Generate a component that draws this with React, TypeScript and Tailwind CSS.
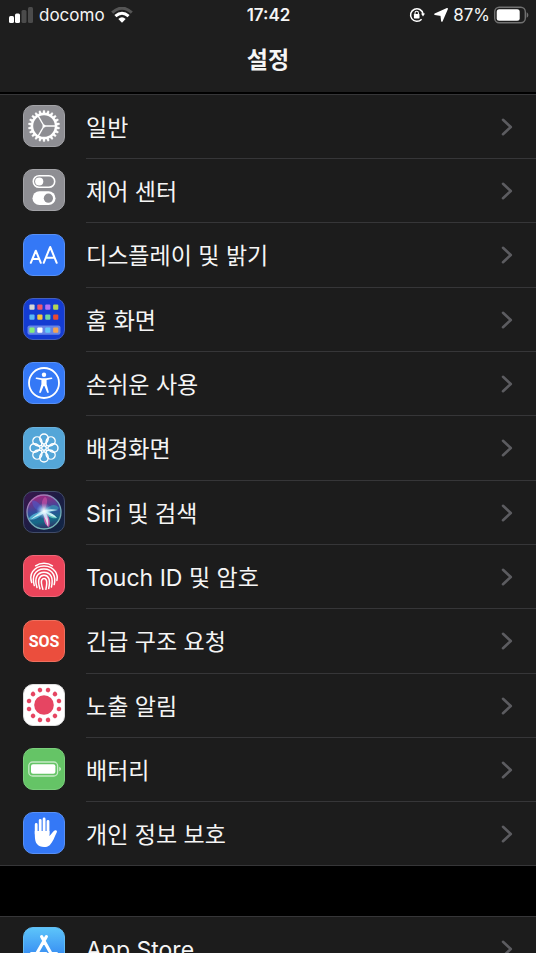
import type { ReactNode } from "react";

interface Setting {
  id: string;
  label: string;
  icon: ReactNode;
}

const GEAR_TEETH = Array.from({ length: 22 }, (_, i) => (i * 360) / 22);
const FLOWER_PETALS = Array.from({ length: 8 }, (_, i) => i * 45);
const EXPOSURE_DOTS = Array.from({ length: 12 }, (_, i) => 15 + i * 30);

const HOME_APPS = [
  ["#d6d6d6", "#f2566a", "#b072f5", "#b3d455"],
  ["#5bb8f5", "#f8c43c", "#6fd6a0", "#ea4a32"],
  ["#83ee78", "#ffffff", "#63c9fa", "#f3a353"],
];

function Tile({ fill, edge, children }: { fill: string; edge: string; children: ReactNode }) {
  return (
    <svg viewBox="0 0 42 42" className="mb-0.5 h-[42px] w-[42px] shrink-0" aria-hidden="true">
      <rect x="0.5" y="0.5" width="41" height="41" rx="9.5" fill={fill} stroke={edge} />
      {children}
    </svg>
  );
}

function GeneralIcon() {
  return (
    <Tile fill="#8e8e93" edge="#a3a3a7">
      <g stroke="#fff" fill="none">
        {GEAR_TEETH.map((deg) => (
          <path
            key={deg}
            d="M19.7 8.5 20.3 5.4h1.4L22.3 8.5z"
            fill="#fff"
            strokeWidth="0.4"
            transform={`rotate(${deg} 21 21)`}
          />
        ))}
        <circle cx="21" cy="21" r="12" strokeWidth="2.4" />
        <circle cx="21" cy="21" r="1.6" fill="#fff" stroke="none" />
        <path d="M21 21h12M21 21l-6-10.4M21 21l-6 10.4" strokeWidth="1.4" />
      </g>
    </Tile>
  );
}

function ControlCenterIcon() {
  return (
    <Tile fill="#8e8e93" edge="#a3a3a7">
      <rect x="10.3" y="6.7" width="21.4" height="11.6" rx="5.8" fill="none" stroke="#fff" strokeWidth="1.6" />
      <circle cx="16.2" cy="12.5" r="4.1" fill="#fff" />
      <rect x="9.5" y="22.3" width="23" height="13.8" rx="6.9" fill="#fff" />
      <circle cx="25.4" cy="29.2" r="4.6" fill="#8e8e93" />
    </Tile>
  );
}

function DisplayIcon() {
  return (
    <Tile fill="#3478f6" edge="#5890f5">
      <g fill="none" stroke="#fff" strokeWidth="2" strokeLinecap="round" strokeLinejoin="round">
        <path d="M7.8 28.8 12.8 16.7 17.8 28.8M9.5 24.9h6.6" />
        <path d="M20.7 28.8 27.2 13 33.7 28.8M22.9 23.7h8.6" />
      </g>
    </Tile>
  );
}

function HomeScreenIcon() {
  return (
    <Tile fill="#143cd2" edge="#4560bc">
      <rect x="4.5" y="27.4" width="33" height="9.4" rx="2.2" fill="#6584e8" />
      {HOME_APPS.map((row, y) =>
        row.map((color, x) => (
          <rect
            key={color}
            x={6.4 + x * 7.9}
            y={[6.6, 16.5, 29.5][y]}
            width="5.2"
            height="5.2"
            rx="1"
            fill={color}
          />
        )),
      )}
    </Tile>
  );
}

function AccessibilityIcon() {
  return (
    <Tile fill="#3478f6" edge="#5890f5">
      <circle cx="21" cy="21" r="15" fill="none" stroke="#fff" strokeWidth="1.8" />
      <circle cx="21" cy="12.7" r="2.2" fill="#fff" />
      <path
        d="M13.5 15.5 19 16.2h4l5.5-.7c1-.1 1.2 1.3.2 1.5l-5.1 1.1v4.1l2.1 7.5c.3 1.2-1.2 1.7-1.7.6L21.4 24h-.8L18 30.3c-.5 1.1-2 .6-1.7-.6l2.1-7.5v-4.1L13.3 17c-1-.2-.8-1.6.2-1.5z"
        fill="#fff"
      />
    </Tile>
  );
}

function WallpaperIcon() {
  return (
    <Tile fill="#54a6d8" edge="#6bb1dc">
      <g fill="none" stroke="#fff" strokeWidth="1.4">
        {FLOWER_PETALS.map((deg) => (
          <path
            key={deg}
            d="M21 17.3C18 15.8 16.6 13.6 16.8 11.2A4.2 4.2 0 0 1 25.2 11.2C25.4 13.6 24 15.8 21 17.3z"
            transform={`rotate(${deg} 21 21)`}
          />
        ))}
        <circle cx="21" cy="21" r="2.3" />
      </g>
    </Tile>
  );
}

function SiriIcon() {
  return (
    <Tile fill="url(#siri-back)" edge="#414b68">
      <defs>
        <linearGradient id="siri-back" x1="0" y1="0" x2="1" y2="1">
          <stop offset="0" stopColor="#3b174f" />
          <stop offset="0.5" stopColor="#1c1c42" />
          <stop offset="1" stopColor="#102846" />
        </linearGradient>
        <linearGradient id="siri-orb" x1="0.4" y1="0" x2="0.6" y2="1">
          <stop offset="0" stopColor="#a0267e" />
          <stop offset="0.45" stopColor="#344a9d" />
          <stop offset="0.75" stopColor="#156a87" />
          <stop offset="1" stopColor="#332a63" />
        </linearGradient>
        <linearGradient id="siri-ring" x1="0" y1="0" x2="0.6" y2="1">
          <stop offset="0" stopColor="#c85ab3" />
          <stop offset="0.5" stopColor="#75a2ba" />
          <stop offset="1" stopColor="#72b6b4" />
        </linearGradient>
        <radialGradient id="siri-glow">
          <stop offset="0" stopColor="#fff" />
          <stop offset="0.35" stopColor="#d8f5ff" stopOpacity="0.7" />
          <stop offset="1" stopColor="#65bdf0" stopOpacity="0" />
        </radialGradient>
      </defs>
      <circle cx="21" cy="21" r="17" fill="url(#siri-orb)" stroke="url(#siri-ring)" strokeWidth="1.3" />
      <path d="M21 20C17 12 12 8 9 10c0 6 5 11 12 10z" fill="#455ed4" opacity="0.5" />
      <path d="M21 20C25 12 25 7 22 6c-4 3-4 9-1 14z" fill="#d451a6" opacity="0.6" />
      <path d="M21 20C28 12 33 13 36 17c-3 4-9 5-15 3z" fill="#39a6b9" opacity="0.6" />
      <path d="M21 20C13 21 6 25 6 28c5 2 11-1 15-8z" fill="#61def0" opacity="0.6" />
      <path d="M21 20C27 21 32 24 34 27c-5 1-10-1-13-7z" fill="#74e8cf" opacity="0.7" />
      <path d="M21 20C20 28 21 34 26 36c2-5 0-12-5-16z" fill="#f05bb5" opacity="0.8" />
      <path
        d="M7 29Q15 22 20 20Q25 17 35 19Q28 20 24 21Q30 22 34 27Q27 25 23 22Q26 28 25 36Q23 29 20 23Q14 25 7 29z"
        fill="#e8fcff"
        opacity="0.8"
      />
      <circle cx="21" cy="20" r="8" fill="url(#siri-glow)" />
    </Tile>
  );
}

function TouchIdIcon() {
  return (
    <Tile fill="#eb445a" edge="#ef6778">
      <g fill="none" stroke="#fff" strokeWidth="1.5" strokeLinecap="round">
        <path d="M12.6 10.8C17.4 7.3 24.6 7.3 29.4 10.8" />
        <path d="M8.7 27.6C7.4 23.5 7.6 19.6 9.6 16.6C14.8 9 27.2 9 32.4 16.6C34.4 19.6 34.6 22.5 33.9 25.4" />
        <path d="M11.3 30.6C10 26 9.8 22.6 11.5 19.3C15.4 12.3 26.6 12.3 30.5 19.3C31.9 22 32 26 31.2 29.6" />
        <path d="M14 32.6C12.7 28.5 12 24.6 13.8 21.3C16.8 15.9 25.2 15.9 28.2 21.3C29.6 24.5 29.3 28.5 28.4 32" />
        <path d="M16.9 33.8C15.7 29.8 14.7 26.4 16.2 23.3C18.2 19.3 23.8 19.3 25.8 23.3C27 26.4 26.5 30 25.7 33.5" />
        <path d="M19.9 34.3C18.9 31 17.7 27.5 18.7 25.1C19.7 22.9 22.3 22.9 23.3 25.1C24.2 27.7 23.6 31.2 22.9 34.3" />
      </g>
    </Tile>
  );
}

function SosIcon() {
  return (
    <Tile fill="#eb4e3d" edge="#ef705f">
      <text
        x="21"
        y="27"
        fill="#fff"
        textAnchor="middle"
        className="font-['Roboto',sans-serif] text-[16px] font-bold"
      >
        SOS
      </text>
    </Tile>
  );
}

function ExposureIcon() {
  return (
    <Tile fill="#fff" edge="#dedede">
      <circle cx="21" cy="21" r="9.8" fill="#e64562" />
      {EXPOSURE_DOTS.map((deg) => (
        <circle key={deg} cx="21" cy="5.5" r="2.3" fill="#e64562" transform={`rotate(${deg} 21 21)`} />
      ))}
    </Tile>
  );
}

function BatteryTileIcon() {
  return (
    <Tile fill="#65c466" edge="#7bcf7c">
      <rect x="5.8" y="14" width="28.8" height="14" rx="3.8" fill="none" stroke="#c6eac6" strokeWidth="1.3" />
      <rect x="8" y="16.2" width="24.4" height="9.6" rx="2" fill="#fff" />
      <path d="M36.2 18.8c2.4.8 2.4 3.6 0 4.4z" fill="#c6eac6" />
    </Tile>
  );
}

function PrivacyIcon() {
  return (
    <Tile fill="#3478f6" edge="#5890f5">
      <path
        d="M13.2 22V12.5M17.2 21V8.3M21.1 21V6.9M25 22V9.3"
        fill="none"
        stroke="#fff"
        strokeWidth="2.8"
        strokeLinecap="round"
      />
      <path
        d="M11.8 19H26.4V24C28.5 22.3 30 18.9 32 18.3C33.5 18 34.4 19 33.8 20.2C31.5 25 29.8 30.1 26.7 33.2C23 36.3 16.5 35.5 13.8 31.8C11.9 29.2 11.8 25.5 11.8 19z"
        fill="#fff"
      />
    </Tile>
  );
}

function AppStoreIcon() {
  return (
    <Tile fill="url(#store-back)" edge="#62bdf4">
      <defs>
        <linearGradient id="store-back" x1="0" y1="0" x2="0" y2="1">
          <stop offset="0" stopColor="#5dc5fa" />
          <stop offset="1" stopColor="#2674ef" />
        </linearGradient>
      </defs>
      <path
        d="M23.3 9.7 14 26M18.7 9.7 30.5 31M8.5 26.5H23M28.5 26.5H33.5M12 29.5 11.2 31"
        fill="none"
        stroke="#fff"
        strokeWidth="3.2"
        strokeLinecap="round"
      />
    </Tile>
  );
}

const SETTINGS: Setting[] = [
  { id: "general", label: "일반", icon: <GeneralIcon /> },
  { id: "control-center", label: "제어 센터", icon: <ControlCenterIcon /> },
  { id: "display", label: "디스플레이 및 밝기", icon: <DisplayIcon /> },
  { id: "home-screen", label: "홈 화면", icon: <HomeScreenIcon /> },
  { id: "accessibility", label: "손쉬운 사용", icon: <AccessibilityIcon /> },
  { id: "wallpaper", label: "배경화면", icon: <WallpaperIcon /> },
  { id: "siri", label: "Siri 및 검색", icon: <SiriIcon /> },
  { id: "touch-id", label: "Touch ID 및 암호", icon: <TouchIdIcon /> },
  { id: "sos", label: "긴급 구조 요청", icon: <SosIcon /> },
  { id: "exposure", label: "노출 알림", icon: <ExposureIcon /> },
  { id: "battery", label: "배터리", icon: <BatteryTileIcon /> },
  { id: "privacy", label: "개인 정보 보호", icon: <PrivacyIcon /> },
];

const STORE_SETTINGS: Setting[] = [
  { id: "app-store", label: "App Store", icon: <AppStoreIcon /> },
];

function StatusBar() {
  return (
    <div className="grid h-[30px] grid-cols-[1fr_auto_1fr] items-center pr-[7px] pl-2 text-[17px] leading-5">
      <div className="flex items-center gap-1.5">
        <svg viewBox="0 0 25 16" className="h-4 w-[25px]" aria-label="신호 강도">
          <rect x="1" y="9" width="5" height="7" rx="1.5" fill="#fff" />
          <rect x="7" y="6.5" width="5" height="9.5" rx="1.5" fill="#fff" />
          <rect x="13.5" y="3" width="5" height="13" rx="1.5" fill="#4b4b4b" />
          <rect x="20" y="0" width="5" height="16" rx="1.5" fill="#4b4b4b" />
        </svg>
        <span>docomo</span>
        <svg viewBox="0 0 22 16" className="h-4 w-[22px]" aria-label="Wi-Fi">
          <path d="M1.2 5.6Q11-3.3 20.8 5.6" fill="none" stroke="#555" strokeWidth="3" />
          <path d="M4.4 9.2Q11 3.3 17.6 9.2" fill="none" stroke="#fff" strokeWidth="3" />
          <path d="M7.3 12Q11 8.7 14.7 12L11 15.7z" fill="#fff" />
        </svg>
      </div>
      <time className="font-semibold">17:42</time>
      <div className="flex items-center justify-end gap-1">
        <svg viewBox="0 0 16 16" className="mr-1 h-4 w-4" aria-label="화면 방향 고정">
          <path d="M14.1 7A6.3 6.3 0 1 0 12.6 12.2" fill="none" stroke="#fff" strokeWidth="1.5" />
          <path d="M12 6.5h4l-2 3z" fill="#fff" />
          <rect x="4.9" y="7" width="5.6" height="4.4" rx="0.6" fill="#fff" />
          <path d="M6 7.5V6a1.7 1.7 0 0 1 3.4 0v1.5" fill="none" stroke="#fff" strokeWidth="1.1" />
        </svg>
        <svg viewBox="0 0 16 16" className="h-4 w-4" aria-label="위치 서비스">
          <path d="M14.2 1.8 8.9 14 8.2 8.2 2 7.3z" fill="#fff" stroke="#fff" strokeWidth="1.6" strokeLinejoin="round" />
        </svg>
        <span>87%</span>
        <svg viewBox="0 0 35 18" className="h-[18px] w-[35px]" aria-label="배터리 잔량">
          <rect x="0.7" y="1.2" width="30.6" height="15.6" rx="4.5" fill="none" stroke="#717171" strokeWidth="1.4" />
          <rect x="2.7" y="3.2" width="23" height="11.6" rx="2.5" fill="#fff" />
          <path d="M32.6 6.2c2.3 1 2.3 4.6 0 5.6z" fill="#717171" />
        </svg>
      </div>
    </div>
  );
}

function SettingRow({ setting }: { setting: Setting }) {
  return (
    <li className="group h-16 nth-[3n]:h-[65px] last:h-[63px]!">
      <a href={`#${setting.id}`} className="flex h-full items-center pl-[23px]">
        {setting.icon}
        <span className="ml-[21px] flex h-full min-w-0 flex-1 items-center justify-between border-b border-[#363638] pr-[23px] group-last:border-b-0">
          <span className="truncate pt-0.5 text-[23px] leading-8">{setting.label}</span>
          <svg viewBox="0 0 12 18" className="h-[18px] w-3 shrink-0" aria-hidden="true">
            <path
              d="M2 1.8 9.8 9 2 16.2"
              fill="none"
              stroke="#5c5c60"
              strokeWidth="2.6"
              strokeLinecap="round"
              strokeLinejoin="round"
            />
          </svg>
        </span>
      </a>
    </li>
  );
}

function SettingsGroup({ settings }: { settings: Setting[] }) {
  return (
    <ul className="shrink-0 border-y border-[#363638] bg-[#1c1c1c]">
      {settings.map((setting) => (
        <SettingRow key={setting.id} setting={setting} />
      ))}
    </ul>
  );
}

export default function App() {
  return (
    <div className="flex h-screen flex-col overflow-hidden bg-black font-['Inter','Noto_Sans_CJK_KR',sans-serif] text-[#f5f5f5]">
      <header className="shrink-0 border-b-2 border-black bg-[#1e1e1e]">
        <StatusBar />
        <h1 className="pt-3.5 pb-4 text-center text-[23px] leading-8 font-bold">설정</h1>
      </header>
      <main className="flex min-h-0 flex-col gap-[50px]">
        <SettingsGroup settings={SETTINGS} />
        <SettingsGroup settings={STORE_SETTINGS} />
      </main>
    </div>
  );
}
